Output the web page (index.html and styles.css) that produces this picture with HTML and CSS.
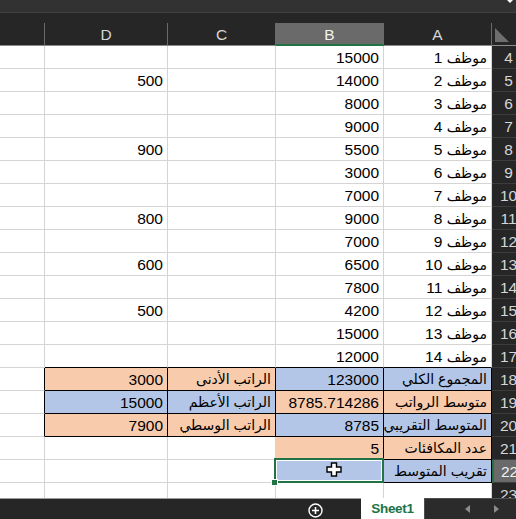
FILE: index.html
```html
<!DOCTYPE html>
<html lang="ar">
<head>
    <meta charset="UTF-8">
    <meta name="viewport" content="width=device-width, initial-scale=1.0">
    <title>Sheet1</title>
    <link rel="stylesheet" href="styles.css">
</head>
<body>
    <div class="topbar"><span class="caret"></span></div>
    <div class="strip"></div>

    <div class="sheet">
        <div class="row colhead">
            <div class="c"></div>
            <div class="c">D</div>
            <div class="c">C</div>
            <div class="c sel">B</div>
            <div class="c">A</div>
            <div class="c corner"><span class="tri"></span></div>
        </div>

        <div class="row"><div class="c"></div><div class="c"></div><div class="c"></div><div class="c">15000</div><div class="c rtl"><span class="ar">موظف</span> 1</div><div class="c rh">4</div></div>
        <div class="row"><div class="c"></div><div class="c">500</div><div class="c"></div><div class="c">14000</div><div class="c rtl"><span class="ar">موظف</span> 2</div><div class="c rh">5</div></div>
        <div class="row"><div class="c"></div><div class="c"></div><div class="c"></div><div class="c">8000</div><div class="c rtl"><span class="ar">موظف</span> 3</div><div class="c rh">6</div></div>
        <div class="row"><div class="c"></div><div class="c"></div><div class="c"></div><div class="c">9000</div><div class="c rtl"><span class="ar">موظف</span> 4</div><div class="c rh">7</div></div>
        <div class="row"><div class="c"></div><div class="c">900</div><div class="c"></div><div class="c">5500</div><div class="c rtl"><span class="ar">موظف</span> 5</div><div class="c rh">8</div></div>
        <div class="row"><div class="c"></div><div class="c"></div><div class="c"></div><div class="c">3000</div><div class="c rtl"><span class="ar">موظف</span> 6</div><div class="c rh">9</div></div>
        <div class="row"><div class="c"></div><div class="c"></div><div class="c"></div><div class="c">7000</div><div class="c rtl"><span class="ar">موظف</span> 7</div><div class="c rh">10</div></div>
        <div class="row"><div class="c"></div><div class="c">800</div><div class="c"></div><div class="c">9000</div><div class="c rtl"><span class="ar">موظف</span> 8</div><div class="c rh">11</div></div>
        <div class="row"><div class="c"></div><div class="c"></div><div class="c"></div><div class="c">7000</div><div class="c rtl"><span class="ar">موظف</span> 9</div><div class="c rh">12</div></div>
        <div class="row"><div class="c"></div><div class="c">600</div><div class="c"></div><div class="c">6500</div><div class="c rtl"><span class="ar">موظف</span> 10</div><div class="c rh">13</div></div>
        <div class="row"><div class="c"></div><div class="c"></div><div class="c"></div><div class="c">7800</div><div class="c rtl"><span class="ar">موظف</span> 11</div><div class="c rh">14</div></div>
        <div class="row"><div class="c"></div><div class="c">500</div><div class="c"></div><div class="c">4200</div><div class="c rtl"><span class="ar">موظف</span> 12</div><div class="c rh">15</div></div>
        <div class="row"><div class="c"></div><div class="c"></div><div class="c"></div><div class="c">15000</div><div class="c rtl"><span class="ar">موظف</span> 13</div><div class="c rh">16</div></div>
        <div class="row"><div class="c"></div><div class="c kb"></div><div class="c kb"></div><div class="c kb">12000</div><div class="c kb rtl"><span class="ar">موظف</span> 14</div><div class="c rh">17</div></div>

        <div class="row"><div class="c kr"></div><div class="c k peach">3000</div><div class="c k peach rtl ar">الراتب الأدنى</div><div class="c k blue">123000</div><div class="c k blue rtl ar">المجموع الكلي</div><div class="c rh">18</div></div>
        <div class="row"><div class="c kr"></div><div class="c k blue">15000</div><div class="c k blue rtl ar">الراتب الأعظم</div><div class="c k peach">8785.714286</div><div class="c k peach rtl ar">متوسط الرواتب</div><div class="c rh">19</div></div>
        <div class="row"><div class="c kr"></div><div class="c k peach">7900</div><div class="c k peach rtl ar">الراتب الوسطي</div><div class="c k blue">8785</div><div class="c k blue rtl ar">المتوسط التقريبي</div><div class="c rh">20</div></div>
        <div class="row"><div class="c"></div><div class="c"></div><div class="c"></div><div class="c k peach">5</div><div class="c k peach rtl ar">عدد المكافئات</div><div class="c rh">21</div></div>
        <div class="row"><div class="c"></div><div class="c"></div><div class="c"></div>
            <div class="c k blue active">
                <span class="handle"></span>
                <svg class="pointer" width="16" height="15" viewBox="0 0 16 15">
                    <polygon points="5.5,1 10.5,1 10.5,5 15,5 15,10 10.5,10 10.5,14 5.5,14 5.5,10 1,10 1,5 5.5,5" fill="#fff" stroke="#000" stroke-width="1.4"/>
                </svg>
            </div>
            <div class="c k blue rtl ar">تقريب المتوسط</div><div class="c rh rh-sel">22</div></div>
        <div class="row"><div class="c"></div><div class="c"></div><div class="c"></div><div class="c"></div><div class="c"></div><div class="c rh">23</div></div>
    </div>

    <div class="tabs">
        <div class="tabs-left">
            <svg class="add" width="15" height="15" viewBox="0 0 15 15">
                <circle cx="7.5" cy="7.5" r="6.5" fill="none" stroke="#fff" stroke-width="1.4"/>
                <path d="M7.5 4v7M4 7.5h7" stroke="#fff" stroke-width="1.6"/>
            </svg>
        </div>
        <div class="tab">Sheet1</div>
        <div class="tabs-nav">
            <span class="arrow left"></span>
            <span class="arrow right"></span>
        </div>
    </div>
</body>
</html>
```

FILE: styles.css
```css
* {
    margin: 0;
    padding: 0;
    box-sizing: border-box;
}

html,
body {
    width: 516px;
    height: 519px;
    overflow: hidden;
}

body {
    background: #262626;
    font-family: 'Liberation Sans', 'DejaVu Sans', sans-serif;
    font-size: 15.5px;
    color: #000;
}

.topbar {
    height: 13px;
    background: #323232;
    border-bottom: 1px solid #404040;
    position: relative;
}

.caret {
    position: absolute;
    top: 0;
    right: 3px;
    border-left: 3px solid transparent;
    border-right: 3px solid transparent;
    border-top: 3px solid #fff;
}

.strip {
    height: 10px;
    background: #262626;
}

.sheet {
    height: 475px;
    overflow: hidden;
    background: #fff;
}

.row {
    display: grid;
    grid-template-columns: 45px 123px 108px 108px 108px 33px;
    height: 23px;
    width: 525px;
}

.c {
    border-right: 1px solid #d4d4d4;
    border-bottom: 1px solid #d4d4d4;
    padding: 1px 4px 0;
    line-height: 21px;
    text-align: right;
    white-space: nowrap;
    overflow: hidden;
}

/* sheet is right-to-left */
.rtl {
    direction: rtl;
    text-align: right;
}

/* arabic labels run a little wide in DejaVu */
.ar {
    font-size: 14px;
}

/* column letters */
.colhead .c {
    background: #262626;
    color: #d6d6d6;
    text-align: center;
    border-right-color: #6a6a6a;
    border-bottom-color: #8c8c8c;
}

.colhead .c.sel {
    background: #6a6a6a;
    color: #f2f2f2;
    border-bottom: 2px solid #217346;
}

.colhead .corner {
    position: relative;
    border-right: none;
}

.tri {
    position: absolute;
    left: 3px;
    top: 5px;
    width: 14px;
    height: 14px;
    background: #6e6e6e;
    clip-path: polygon(0 0, 0 100%, 100% 100%);
}

/* row numbers */
.rh {
    background: #262626;
    color: #d6d6d6;
    text-align: center;
    border-right: none;
    border-bottom-color: #3c3c3c;
    padding: 1px 0 0;
}

.rh-sel {
    background: #6a6a6a;
    color: #f2f2f2;
    border-left: 2px solid #217346;
}

/* fills and black cell borders */
.peach {
    background: #f8cbad;
}

.blue {
    background: #b4c6e7;
}

.k {
    border-right-color: #000;
    border-bottom-color: #000;
}

.kb {
    border-bottom-color: #000;
}

.kr {
    border-right-color: #000;
}

.active {
    position: relative;
    overflow: visible;
}

.active::after {
    content: '';
    position: absolute;
    top: -2px;
    left: -2px;
    right: -1px;
    bottom: -1px;
    border: 2px solid #217346;
    box-shadow: inset 0 0 0 1px #fff;
}

.handle {
    position: absolute;
    left: -5px;
    top: 19px;
    width: 7px;
    height: 7px;
    background: #217346;
    border: 1px solid #fff;
    z-index: 2;
}

.pointer {
    position: absolute;
    left: 50px;
    top: 2px;
    z-index: 2;
}

/* sheet tabs */
.tabs {
    display: flex;
    height: 21px;
    background: #262626;
}

.tabs-left {
    flex: 0 0 361px;
    border-top: 1px solid #9d9d9d;
    display: flex;
    justify-content: flex-end;
    padding: 4px 38px 0 0;
}

.tab {
    flex: 0 0 63px;
    background: #fff;
    color: #217346;
    font-weight: 700;
    font-size: 13.5px;
    letter-spacing: -0.3px;
    text-align: center;
    line-height: 21px;
}

.tabs-nav {
    flex: 1;
    background: #2b2b2b;
    border-top: 1px solid #4e4e4e;
    border-left: 1px solid #4e4e4e;
    display: flex;
    align-items: center;
    gap: 24px;
    padding-left: 40px;
}

.arrow {
    width: 0;
    height: 0;
    border-top: 4px solid transparent;
    border-bottom: 4px solid transparent;
}

.arrow.left {
    border-right: 5px solid #8c8c8c;
}

.arrow.right {
    border-left: 5px solid #8c8c8c;
}
```
